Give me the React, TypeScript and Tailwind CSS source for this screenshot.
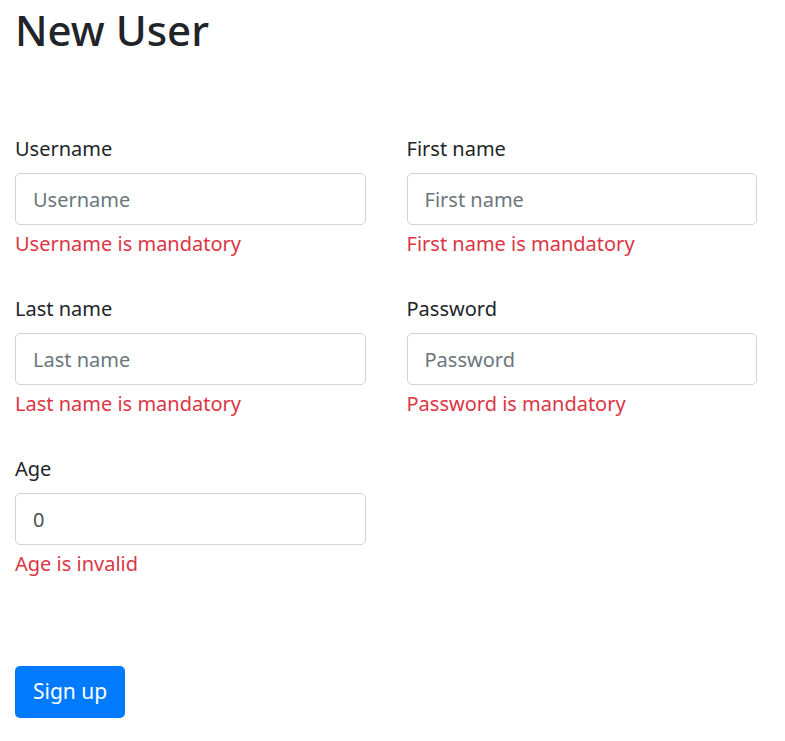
export default function App() {
  const fields = [
    { label: "Username", placeholder: "Username", error: "Username is mandatory" },
    { label: "First name", placeholder: "First name", error: "First name is mandatory" },
    { label: "Last name", placeholder: "Last name", error: "Last name is mandatory" },
    { label: "Password", placeholder: "Password", error: "Password is mandatory", type: "password" },
    { label: "Age", value: "0", error: "Age is invalid" },
  ];

  return (
    <div className="min-h-screen bg-white pl-[15px] font-['Noto_Sans',sans-serif] text-[#212529]">
      <h1 className="pt-[3px] text-[42px] leading-[53px] font-medium">New User</h1>

      <form className="mt-[77px] grid w-[742px] grid-cols-2 gap-x-[41px] gap-y-[34px]">
        {fields.map((f) => (
          <div key={f.label} className="flex flex-col">
            <label className="pt-[1px] text-[20px] leading-[30px]">{f.label}</label>
            <input
              type={f.type ?? "text"}
              placeholder={f.placeholder}
              defaultValue={f.value}
              className="mt-[9px] h-[52px] rounded-[5px] border border-[#ced4da] px-[17px] text-[20px] text-[#495057] outline-none placeholder:text-[#6c757d]"
            />
            <div className="mt-[4px] text-[20px] leading-[30px] text-[#dc3545]">{f.error}</div>
          </div>
        ))}
      </form>

      <button
        type="button"
        className="mt-[87px] h-[52px] rounded-[5px] bg-[#007bff] px-[18px] text-[21px] text-white"
      >
        Sign up
      </button>
    </div>
  );
}
